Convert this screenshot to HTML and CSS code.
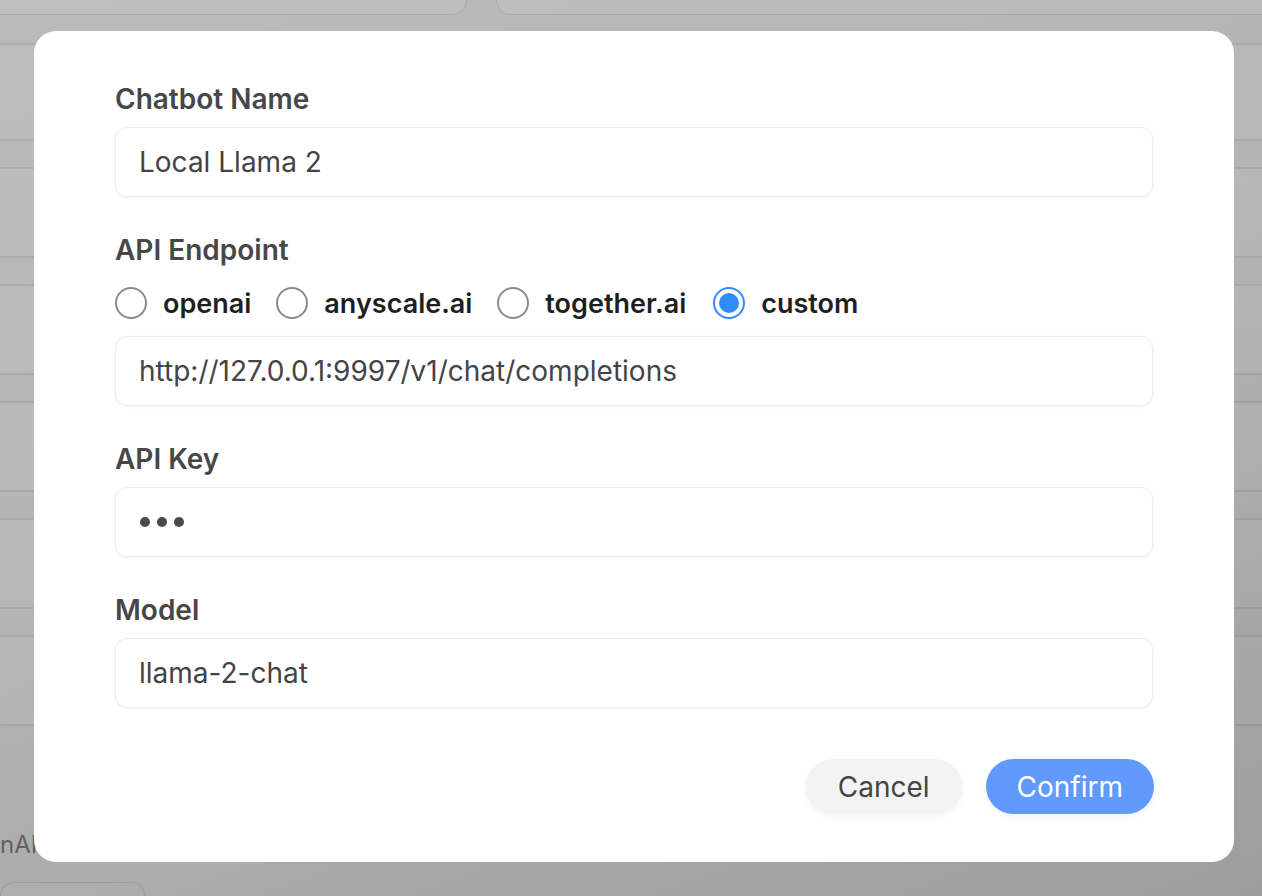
FILE: index.html
```html
<!DOCTYPE html>
<html lang="en">
<head>
<meta charset="utf-8">
<title>Chatbot settings</title>
<link rel="stylesheet" href="styles.css">
</head>
<body>
<div class="page">
  <div class="cols">
    <div class="col">
      <div class="top-card"></div>
      <div class="row first"></div>
      <div class="row"></div>
      <div class="row"></div>
      <div class="row"></div>
      <div class="row"></div>
      <div class="row"></div>
      <div class="foot-text">nAI-</div>
      <div class="foot-box"></div>
    </div>
    <div class="col">
      <div class="top-card"></div>
      <div class="row first"></div>
      <div class="row"></div>
      <div class="row"></div>
      <div class="row"></div>
      <div class="row"></div>
      <div class="row"></div>
    </div>
  </div>
</div>

<div class="overlay">
  <div class="modal">
    <div class="field">
      <div class="label">Chatbot Name</div>
      <div class="input">Local Llama 2</div>
    </div>
    <div class="field">
      <div class="label">API Endpoint</div>
      <div class="radios">
        <div class="radio"><span class="circle"></span><span class="rtext">openai</span></div>
        <div class="radio"><span class="circle"></span><span class="rtext">anyscale.ai</span></div>
        <div class="radio"><span class="circle"></span><span class="rtext">together.ai</span></div>
        <div class="radio"><span class="circle checked"></span><span class="rtext">custom</span></div>
      </div>
      <div class="input">http://127.0.0.1:9997/v1/chat/completions</div>
    </div>
    <div class="field">
      <div class="label">API Key</div>
      <div class="input"><span class="dots"><i></i><i></i><i></i></span></div>
    </div>
    <div class="field">
      <div class="label">Model</div>
      <div class="input">llama-2-chat</div>
    </div>
    <div class="actions">
      <button class="btn cancel">Cancel</button>
      <button class="btn confirm">Confirm</button>
    </div>
  </div>
</div>
</body>
</html>
```
FILE: styles.css
```css
* { box-sizing: border-box; }
html, body { margin: 0; padding: 0; }
body {
  width: 1262px;
  height: 896px;
  overflow: hidden;
  background: #f6f6f6;
  font-family: Inter, "Noto Sans", "Liberation Sans", sans-serif;
}

/* background page */
.page { height: 896px; overflow: hidden; }
.cols {
  display: grid;
  grid-template-columns: 467px 1fr;
  column-gap: 29px;
  margin-top: -60px;
}
.col { display: flex; flex-direction: column; }
.top-card {
  height: 75px;
  background: #fbfbfb;
  border: 1px solid #e6e6e6;
  border-radius: 0 0 14px 14px;
  margin-left: -20px;
}
.col + .col .top-card { margin-left: 0; margin-right: -20px; border-radius: 0 0 0 14px; }
.row {
  height: 91px;
  margin-top: 26px;
  background: #fafafa;
  border-top: 2px solid #e6e6e6;
  border-bottom: 2px solid #e6e6e6;
}
.row.first { height: 98px; margin-top: 28px; }
.foot-text {
  margin-top: 104px;
  margin-left: 0;
  font-size: 24px;
  color: #8a8a8a;
  line-height: 30px;
}
.foot-box {
  margin-top: 22px;
  width: 145px;
  height: 40px;
  border: 1px solid #e0e0e0;
  border-radius: 14px 14px 0 0;
  border-bottom: none;
  background: #fafafa;
}

/* overlay and modal */
.overlay {
  position: fixed;
  inset: 0;
  background: linear-gradient(160deg, rgba(0,0,0,0.24) 0%, rgba(0,0,0,0.27) 50%, rgba(0,0,0,0.36) 100%);
  padding: 31px 0 0 34px;
}
.modal {
  width: 1200px;
  height: 831px;
  background: #fff;
  border-radius: 22px;
  padding: 53px 81px 48px 81px;
  display: flex;
  flex-direction: column;
}
.field { display: flex; flex-direction: column; }
.field + .field { margin-top: 38px; }
.field:last-of-type { margin-top: 39px; }
.label {
  font-size: 28px;
  line-height: 30px;
  font-weight: 600;
  color: #474747;
  margin-bottom: 13px;
}
.input {
  height: 70px;
  border: 1.5px solid #ececec;
  border-radius: 12px;
  box-shadow: 0 1px 3px rgba(0,0,0,0.06);
  padding: 0 23px;
  display: flex;
  align-items: center;
  font-size: 28px;
  color: #444;
}
.dots { display: flex; gap: 7px; padding-left: 1px; }
.dots i {
  width: 10px; height: 10px; border-radius: 50%;
  background: #4a4a4a; display: block;
}

.radios {
  display: flex;
  align-items: center;
  gap: 25px;
  margin-top: 9px;
  margin-bottom: 17px;
  height: 32px;
}
.radio { display: flex; align-items: center; gap: 16px; }
.radio:last-child { margin-left: 2px; }
.circle {
  width: 32px; height: 32px;
  border: 2px solid #8a8a8a;
  border-radius: 50%;
  display: flex; align-items: center; justify-content: center;
  flex: none;
}
.circle.checked { border-color: #2f8cff; }
.circle.checked::after {
  content: "";
  width: 20px; height: 20px; border-radius: 50%;
  background: #2f8cff;
}
.rtext {
  font-size: 27px;
  font-weight: 600;
  color: #1f1f1f;
}

.actions {
  margin-top: auto;
  display: flex;
  justify-content: flex-end;
  gap: 24px;
  margin-right: -1px;
}
.btn {
  height: 55px;
  border: none;
  border-radius: 28px;
  font-family: inherit;
  font-size: 28px;
  padding: 0 32px;
}
.cancel {
  background: #f3f3f3;
  color: #444;
  box-shadow: 0 2px 6px rgba(0,0,0,0.06);
}
.confirm {
  background: #619afc;
  color: #fff;
  padding: 0 31px;
  box-shadow: 0 2px 6px rgba(0,0,0,0.06);
}
```
